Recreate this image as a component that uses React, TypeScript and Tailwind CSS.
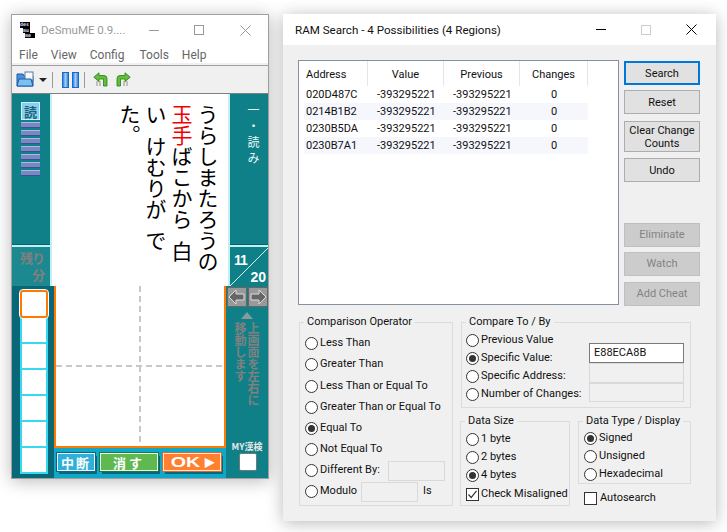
const FONT = "font-['Roboto',sans-serif]";
const JP = "font-['Noto_Sans_CJK_JP',sans-serif]";

const Radio = ({ checked = false }: { checked?: boolean }) => (
  <span className="flex h-[13px] w-[13px] shrink-0 items-center justify-center rounded-full border border-[#333] bg-white">
    {checked && <span className="h-[7px] w-[7px] rounded-full bg-[#333]" />}
  </span>
);

const RadioRow = ({ label, checked, h, children }: { label: string; checked?: boolean; h: string; children?: React.ReactNode }) => (
  <div className={`flex items-center gap-[2px] ${h}`}>
    <Radio checked={checked} />
    <span className="whitespace-nowrap">{label}</span>
    {children}
  </div>
);

const Field = ({ className }: { className: string }) => (
  <div className={`border border-[#d9d9d9] bg-[#f0f0f0] ${className}`} />
);

const Group = ({ title, className, children }: { title: string; className: string; children: React.ReactNode }) => (
  <fieldset className={`border border-[#dcdcdc] ${className}`}>
    <legend className="-ml-[1px] whitespace-nowrap px-[3px] leading-[12px]">{title}</legend>
    {children}
  </fieldset>
);

const Btn = ({ label, className = '' }: { label: string; className?: string }) => (
  <div className={`flex w-[76px] items-center justify-center bg-[#e1e1e1] text-center leading-[13px] ${className}`}>{label}</div>
);

const DisabledBtn = ({ label, className = '' }: { label: string; className?: string }) => (
  <div className={`flex h-[24px] w-[76px] items-center justify-center border border-[#bfbfbf] bg-[#cccccc] pt-[1px] text-[#838383] ${className}`}>{label}</div>
);

const CloseIcon = ({ color }: { color: string }) => (
  <svg width="11" height="11" viewBox="0 0 11 11" className="shrink-0" fill="none">
    <path d="M0.5 0.5L10.5 10.5M10.5 0.5L0.5 10.5" stroke={color} />
  </svg>
);

const rows = ['020D487C', '0214B1B2', '0230B5DA', '0230B7A1'];

const RamSearch = () => (
  <div className={`flex h-[507px] w-[433px] flex-col bg-[#f0f0f0] text-[11px] text-[#111] shadow-[0_2px_16px_rgba(0,0,0,0.28)] ${FONT}`}>
    <div className="flex h-[31px] items-center bg-white pl-[12px] pr-[19px] text-[11.6px] text-[#111]">
      <span className="flex-1 pt-[2px]">RAM Search - 4 Possibilities (4 Regions)</span>
      <span className="mr-[35px] h-px w-[10px] bg-black" />
      <span className="mr-[35px] h-[10px] w-[10px] border border-[#ccc]" />
      <CloseIcon color="#000" />
    </div>

    <div className="flex items-start gap-[5px] pl-[15px] pt-[15px]">
      <div className="h-[245px] w-[321px] border border-[#8591a0] bg-white pl-[5px]">
        <div className="flex h-[25px] w-[284px]">
          <div className="flex w-[64px] items-center border-r border-[#e5e5e5] pl-[2px] pt-[3px]">Address</div>
          <div className="flex w-[76px] items-center justify-center border-r border-[#e5e5e5] pt-[3px]">Value</div>
          <div className="flex w-[76px] items-center justify-center border-r border-[#e5e5e5] pt-[3px]">Previous</div>
          <div className="flex w-[68px] items-center justify-center border-r border-[#e5e5e5] pt-[3px]">Changes</div>
        </div>
        {rows.map((r, i) => (
          <div key={r} className={`flex h-[17px] w-[284px] items-start pt-[2px] leading-[14px] ${i % 2 ? 'bg-[#f5f7fd]' : ''}`}>
            <span className="w-[64px] pl-[2px]">{r}</span>
            <span className="w-[76px] pl-[9px]">-393295221</span>
            <span className="w-[76px] pl-[9px]">-393295221</span>
            <span className="w-[68px] text-center">0</span>
          </div>
        ))}
      </div>

      <div className="mt-[1px] flex flex-col">
        <Btn label="Search" className="h-[24px] border-2 border-[#0078d7]" />
        <Btn label="Reset" className="mt-[5px] h-[24px] border border-[#adadad]" />
        <Btn label="Clear Change Counts" className="mt-[7px] h-[31px] border border-[#adadad] px-[2px]" />
        <Btn label="Undo" className="mt-[6px] h-[24px] border border-[#adadad]" />
        <DisabledBtn label="Eliminate" className="mt-[41px]" />
        <DisabledBtn label="Watch" className="mt-[5px]" />
        <DisabledBtn label="Add Cheat" className="mt-[6px]" />
      </div>
    </div>

    <div className="flex items-start pl-[16px] pt-[10px]">
      <Group title="Comparison Operator" className="h-[190px] w-[154px] pl-[5px] pt-[5px]">
        <RadioRow label="Less Than" h="h-[21px]" />
        <RadioRow label="Greater Than" h="h-[21px]" />
        <RadioRow label="Less Than or Equal To" h="h-[22px]" />
        <RadioRow label="Greater Than or Equal To" h="h-[21px]" />
        <RadioRow label="Equal To" checked h="h-[21px]" />
        <RadioRow label="Not Equal To" h="h-[21px]" />
        <RadioRow label="Different By:" h="h-[21px]">
          <Field className="ml-[6px] h-[20px] w-[57px]" />
        </RadioRow>
        <RadioRow label="Modulo" h="h-[21px]">
          <Field className="ml-[2px] h-[20px] w-[57px]" />
          <span className="ml-[3px]">Is</span>
        </RadioRow>
      </Group>

      <div className="ml-[8px] flex flex-col">
        <Group title="Compare To / By" className="h-[92px] w-[230px] pl-[5px] pt-[3px]">
          <div className="-ml-[1px] flex">
            <div className="w-[123px]">
              <RadioRow label="Previous Value" h="h-[18px]" />
              <RadioRow label="Specific Value:" checked h="h-[18px]" />
              <RadioRow label="Specific Address:" h="h-[18px]" />
              <RadioRow label="Number of Changes:" h="h-[18px]" />
            </div>
            <div className="flex flex-col pt-[12px]">
              <div className="flex h-[20px] w-[95px] items-center border border-[#7a7a7a] bg-white pl-[4px]">E88ECA8B</div>
              <Field className="h-[20px] w-[95px]" />
              <Field className="h-[19px] w-[95px]" />
            </div>
          </div>
        </Group>

        <div className="-ml-[1px] mt-[7px] flex items-start gap-[8px]">
          <Group title="Data Size" className="h-[91px] w-[110px] pl-[5px] pt-[3px]">
            <RadioRow label="1 byte" h="h-[18px]" />
            <RadioRow label="2 bytes" h="h-[18px]" />
            <RadioRow label="4 bytes" checked h="h-[18px]" />
            <div className="flex h-[20px] items-center gap-[2px]">
              <span className="flex h-[13px] w-[13px] items-center justify-center border border-[#333] bg-white">
                <svg width="11" height="11" viewBox="0 0 11 11" fill="none" stroke="#333" strokeWidth="1.2">
                  <path d="M1.5 5.5L4.2 8.5L9.5 1.8" />
                </svg>
              </span>
              <span className="whitespace-nowrap">Check Misaligned</span>
            </div>
          </Group>
          <div className="flex flex-col">
            <Group title="Data Type / Display" className="h-[69px] w-[113px] pl-[5px] pt-[2px]">
              <RadioRow label="Signed" checked h="h-[18px]" />
              <RadioRow label="Unsigned" h="h-[18px]" />
              <RadioRow label="Hexadecimal" h="h-[18px]" />
            </Group>
            <div className="ml-[6px] mt-[6px] flex items-center gap-[3px]">
              <span className="h-[13px] w-[13px] border border-[#333] bg-white" />
              <span>Autosearch</span>
            </div>
          </div>
        </div>
      </div>
    </div>
  </div>
);

const ToolbarIcons = () => (
  <div className="flex h-[27px] items-center bg-[#f0f0f0] pl-[4px]">
    <svg width="18" height="17" viewBox="0 0 18 17">
      <path d="M1 3h6l1 2h9v10H1z" fill="#4a90d8" stroke="#1c5aa8" />
      <rect x="9" y="1" width="8" height="8" fill="#f4f8fc" stroke="#5a7ca0" />
      <path d="M1 15l2-7h12l2 7z" fill="#7cc0f0" stroke="#1c5aa8" />
    </svg>
    <svg width="8" height="4" viewBox="0 0 8 4" className="ml-[5px]"><path d="M0 0h8L4 4z" fill="#222" /></svg>
    <span className="ml-[5px] h-[16px] w-px bg-[#999]" />
    <div className="ml-[9px] flex gap-[3px]">
      <span className="h-[16px] w-[7px] border border-[#1a68c8] bg-gradient-to-r from-[#2a80e0] via-[#a0d0f8] to-[#2a80e0]" />
      <span className="h-[16px] w-[7px] border border-[#1a68c8] bg-gradient-to-r from-[#2a80e0] via-[#a0d0f8] to-[#2a80e0]" />
    </div>
    <span className="ml-[5px] h-[16px] w-px bg-[#999]" />
    <svg width="15" height="15" viewBox="0 0 15 15" className="ml-[8px]">
      <path d="M4 9v5M7 9v5" stroke="#aaa" strokeWidth="1.4" fill="none" />
      <path d="M14 14V6.5a3 3 0 0 0-3-3H6V0.8L0.8 5.2 6 9.6V7h4.5v7z" fill="#62c038" stroke="#2c7a18" strokeWidth="0.8" />
    </svg>
    <svg width="15" height="15" viewBox="0 0 15 15" className="ml-[8px]">
      <path d="M8 9v5M11 9v5" stroke="#aaa" strokeWidth="1.4" fill="none" />
      <path d="M1 14V6.5a3 3 0 0 1 3-3h5V0.8l5.2 4.4L9 9.6V7H4.5v7z" fill="#62c038" stroke="#2c7a18" strokeWidth="0.8" />
    </svg>
  </div>
);

const DesmumeIcon = () => (
  <div className="flex h-[16px] w-[16px] shrink-0 flex-col text-[5px] font-bold leading-[5px] text-[#d8d8ff] font-['DejaVu_Sans_Mono',monospace]">
    <span className="h-[6px] w-[10px] overflow-hidden bg-black">des</span>
    <span className="ml-[3px] h-[5px] w-[7px] overflow-hidden bg-black">mu</span>
    <span className="ml-[5px] h-[5px] w-[10px] overflow-hidden bg-black">me</span>
  </div>
);

const Arrow = ({ left = false }: { left?: boolean }) => (
  <div className="h-[20px] w-[20px] border border-[#666] bg-[#999]">
    <svg width="18" height="18" viewBox="0 0 18 18">
      <path d={left ? 'M1 9L8 2v4h8v6H8v4z' : 'M17 9L10 2v4H2v6h8v4z'} fill="#666" stroke="#ddd" />
    </svg>
  </div>
);

const TopScreen = () => (
  <div className={`flex h-[192px] ${JP}`}>
    <div className="flex w-[38px] flex-col bg-[#108088]">
      <div className="flex flex-1 flex-col items-start gap-[2px] pl-[9px] pt-[8px]">
        <div className="flex h-[18px] w-[19px] items-center justify-center border border-[#d0f0f8] bg-[#88d0f0] text-[13px] font-bold leading-none text-[#1c6078]">読</div>
        {[0, 1, 2, 3, 4, 5, 6].map(i => (
          <div key={i} className="h-[6px] w-[19px] border-b border-t border-b-[#405080] border-t-[#b0b8e0] bg-[#7888c8]" />
        ))}
      </div>
      <div className="h-[1px] bg-[#086070]" />
      <div className="h-[2px] bg-[#c0f0f0]" />
      <div className="flex h-[39px] flex-col items-end bg-[#1c8890] pr-[5px] pt-[2px] text-[13px] font-bold leading-[17px] text-[#808080]">
        <span className="mr-[1px] tracking-[-1px]">残り</span>
        <span>分</span>
      </div>
    </div>
    <div className="w-[2px] bg-[#c0f0f0]" />
    <div className="flex w-[176px] flex-row-reverse bg-white pr-[7px] pt-[10px] text-[21px] leading-[26px] text-black">
      <div className="w-[26px] whitespace-nowrap [writing-mode:vertical-rl]">うらしまたろうの</div>
      <div className="w-[26px] whitespace-pre [writing-mode:vertical-rl]"><span className="text-[#f00000]">玉手</span>ばこから{'\u2002'}白</div>
      <div className="w-[26px] whitespace-pre [writing-mode:vertical-rl]">い{'\u2002'}けむりが{'\u2002'}で</div>
      <div className="w-[26px] whitespace-nowrap [writing-mode:vertical-rl]">た。</div>
    </div>
    <div className="w-[2px] bg-[#c0f0f0]" />
    <div className="flex w-[38px] flex-col bg-[#108088]">
      <div className="flex-1 pr-[7px] pt-[10px] text-[12px] leading-[15px] tracking-[4px] text-[#e8f8f8] [writing-mode:vertical-rl]">
        一・読み
      </div>
      <div className="h-[1px] bg-[#086070]" />
      <div className="h-[2px] bg-[#c0f0f0]" />
      <div className="relative h-[39px] text-[14px] font-bold leading-none text-white font-['Liberation_Sans',sans-serif]">
        <svg width="38" height="39" viewBox="0 0 38 39" className="absolute inset-0">
          <path d="M0 39L38 1" stroke="#d8f4f4" />
        </svg>
        <span className="absolute left-[4px] top-[6px] tracking-[-1px]">11</span>
        <span className="absolute right-[2px] top-[23px]">20</span>
      </div>
    </div>
  </div>
);

const cells = [0, 1, 2, 3, 4, 5];

const BottomScreen = () => (
  <div className={`flex h-[192px] ${JP}`}>
    <div className="w-[42px] bg-[#086878] pl-[8px] pt-[4px]">
      <div className="h-[28px] w-[28px] rounded-[3px] border-[2px] border-[#ff7a00] bg-white outline-1 outline-white" />
      {cells.map(i => (
        <div key={i} className="h-[26px] w-[28px] border-x-2 border-b-2 border-[#38d8f0] bg-white" />
      ))}
    </div>
    <div className="flex w-[172px] flex-col">
      <div className="relative flex-1 border-x-2 border-b-2 border-[#ff7a00] bg-white">
        <div className="absolute bottom-0 left-[83px] top-0 w-[2px] bg-[repeating-linear-gradient(to_bottom,#c8c8c8_0,#c8c8c8_6px,transparent_6px,transparent_10px)]" />
        <div className="absolute left-0 right-0 top-[79px] h-[2px] bg-[repeating-linear-gradient(to_right,#c8c8c8_0,#c8c8c8_6px,transparent_6px,transparent_10px)]" />
      </div>
      <div className="flex h-[30px] items-start gap-[5px] bg-[#10a8c8] pl-[3px] pt-[5px] text-[13px] font-bold leading-none text-white">
        <div className="flex h-[18px] w-[38px] items-center justify-center border border-[#e8f8ff] bg-[#30b0d8] tracking-[2px] shadow-[2px_3px_0_#086878] outline outline-1 outline-[#10608c]">中断</div>
        <div className="flex h-[18px] w-[58px] items-center justify-center border border-[#e8fff0] bg-[#60b850] tracking-[3px] shadow-[2px_3px_0_#086878] outline outline-1 outline-[#187840]">消す</div>
        <div className="flex h-[18px] w-[58px] items-center justify-center gap-[9px] border border-[#fff0e0] bg-[#ff8030] shadow-[2px_3px_0_#086878] outline outline-1 outline-[#e86020] font-['Liberation_Sans',sans-serif]">
          <span className="ml-[4px] scale-x-[1.4] text-[14px] font-black">OK</span>
          <span className="text-[12px]">▶</span>
        </div>
      </div>
    </div>
    <div className="flex w-[42px] flex-col bg-[#108088]">
      <div className="flex gap-[1px] pl-[1px] pt-[1px]"><Arrow left /><Arrow /></div>
      <div className="mx-auto mt-[5px] h-0 w-0 border-x-[6px] border-b-[7px] border-x-transparent border-b-[#8a9a9a]" />
      <div className="flex flex-1 flex-row-reverse justify-center pt-[3px] text-[12px] font-bold leading-[13px] text-[#808080]">
        <span className="[writing-mode:vertical-rl]">上画面を左右に</span>
        <span className="[writing-mode:vertical-rl]">移動します</span>
      </div>
      <span className="text-center text-[9px] font-bold leading-[11px] text-[#e8e8e8]">MY漢検</span>
      <div className="mb-[7px] ml-[13px] mt-[1px] h-[18px] w-[18px] rounded-[2px] border border-[#777] bg-white" />
    </div>
  </div>
);

const DesmumeWindow = () => (
  <div className={`w-[258px] border border-[#a0a0a0] bg-white text-[12px] shadow-[0_2px_16px_rgba(0,0,0,0.28)] ${FONT}`}>
    <div className="flex h-[30px] items-center pl-[8px] pr-[17px] text-[#999]">
      <DesmumeIcon />
      <span className="ml-[5px] flex-1 whitespace-nowrap pt-[2px] text-[11.5px]">DeSmuME 0.9....</span>
      <span className="mr-[35px] h-px w-[10px] bg-[#999]" />
      <span className="mr-[36px] h-[10px] w-[10px] border border-[#999]" />
      <CloseIcon color="#999" />
    </div>
    <div className="flex h-[18px] items-center gap-[13px] pl-[7px] pt-[2px] text-[#666]">
      <span>File</span>
      <span>View</span>
      <span>Config</span>
      <span className="ml-[2px]">Tools</span>
      <span>Help</span>
    </div>
    <div className="h-[2px] bg-[#f0f0f0]" />
    <div className="h-px bg-[#a0a0a0]" />
    <ToolbarIcons />
    <div className="h-px bg-[#808080]" />
    <TopScreen />
    <BottomScreen />
  </div>
);

export default function App() {
  return (
    <div className="flex h-[532px] w-[727px] items-start gap-[14px] overflow-hidden bg-white pl-[11px] pt-[14px]">
      <DesmumeWindow />
      <RamSearch />
    </div>
  );
}
